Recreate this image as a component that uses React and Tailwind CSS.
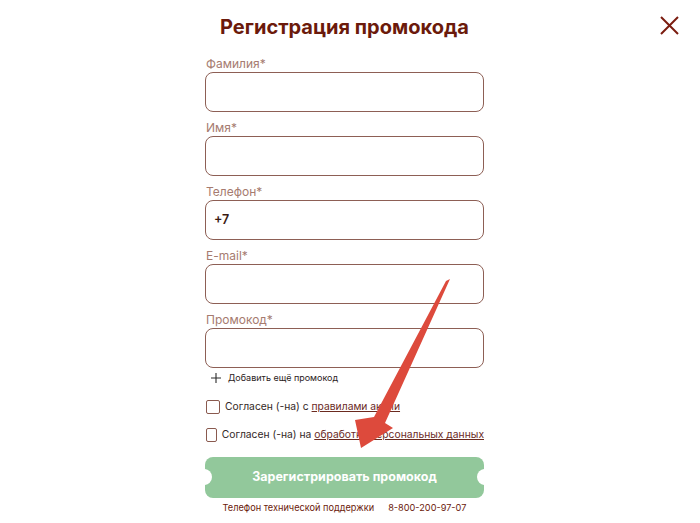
import React from "react";

function Field({ label, value }) {
  return (
    <div className="flex flex-col mb-[8px]">
      <label className="text-[12px] leading-[16px] text-[#a67b6f] pl-[1px]">{label}</label>
      <div className="h-[40px] border border-[#8d5f55] rounded-[8px] flex items-center px-[8px]">
        {value ? <span className="text-[12.5px] font-semibold text-[#3b1a12]">{value}</span> : null}
      </div>
    </div>
  );
}

export default function App() {
  return (
    <div className="relative w-[700px] h-[523px] bg-white overflow-hidden font-['Inter',sans-serif]">
      <button className="absolute left-[659px] top-[15px] w-[21px] h-[21px]">
        <svg width="21" height="21" viewBox="0 0 21 21">
          <path d="M2 2 L19 19 M19 2 L2 19" stroke="#7b1c10" strokeWidth="2" fill="none" />
        </svg>
      </button>
      <div className="pl-[205px] pt-[13px] w-[484px]">
        <h1 className="text-center text-[20px] leading-[28px] font-bold text-[#6b1a0b] mb-[15px]">
          Регистрация промокода
        </h1>
        <Field label="Фамилия*" />
        <Field label="Имя*" />
        <Field label="Телефон*" value="+7" />
        <Field label="E-mail*" />
        <div className="flex flex-col">
          <label className="text-[12px] leading-[16px] text-[#a67b6f] pl-[1px]">Промокод*</label>
          <div className="h-[40px] border border-[#8d5f55] rounded-[8px]" />
        </div>
        <div className="flex items-center mt-[3px] pl-[6px] h-[14px]">
          <svg width="10" height="10" viewBox="0 0 10 10" className="mr-[7px]">
            <path d="M5 0 V10 M0 5 H10" stroke="#2b2b2b" strokeWidth="1.1" />
          </svg>
          <span className="text-[9px] leading-[14px] text-[#2b2222]">Добавить ещё промокод</span>
        </div>
        <div className="flex items-center mt-[14px] h-[16px]">
          <span className="w-[14px] h-[14px] border border-[#8a5a4f] rounded-[2px] mr-[5px] ml-[1px]" />
          <span className="text-[10.3px] text-[#332826] whitespace-nowrap">
            Согласен (-на) с <span className="underline text-[#6b2a1f]">правилами акции</span>
          </span>
        </div>
        <div className="flex items-center mt-[12px] h-[16px]">
          <span className="w-[14px] h-[14px] border border-[#8a5a4f] rounded-[2px] mr-[5px] ml-[1px]" />
          <span className="text-[10.3px] text-[#332826] whitespace-nowrap">
            Согласен (-на) на <span className="underline text-[#6b2a1f]">обработку персональных данных</span>
          </span>
        </div>
        <div className="relative mt-[14px] h-[41px] rounded-[8px] bg-[#92c89b] flex items-center justify-center overflow-hidden">
          <span className="absolute left-[-9px] top-[12px] w-[16px] h-[16px] rounded-full bg-white" />
          <span className="absolute right-[-9px] top-[12px] w-[16px] h-[16px] rounded-full bg-white" />
          <span className="text-[12.5px] font-bold text-white">Зарегистрировать промокод</span>
        </div>
        <div className="flex justify-center gap-[14px] mt-[3px] text-[9.2px] leading-[14px] text-[#6b1a0b]">
          <span>Телефон технической поддержки</span>
          <span>8-800-200-97-07</span>
        </div>
      </div>
      <svg className="absolute left-0 top-0 pointer-events-none" width="700" height="523" viewBox="0 0 700 523">
        <polygon
          points="450,279 385,423 393,428 361,448 355,420 374,417 446,281"
          fill="#dd4a3c"
        />
      </svg>
    </div>
  );
}
